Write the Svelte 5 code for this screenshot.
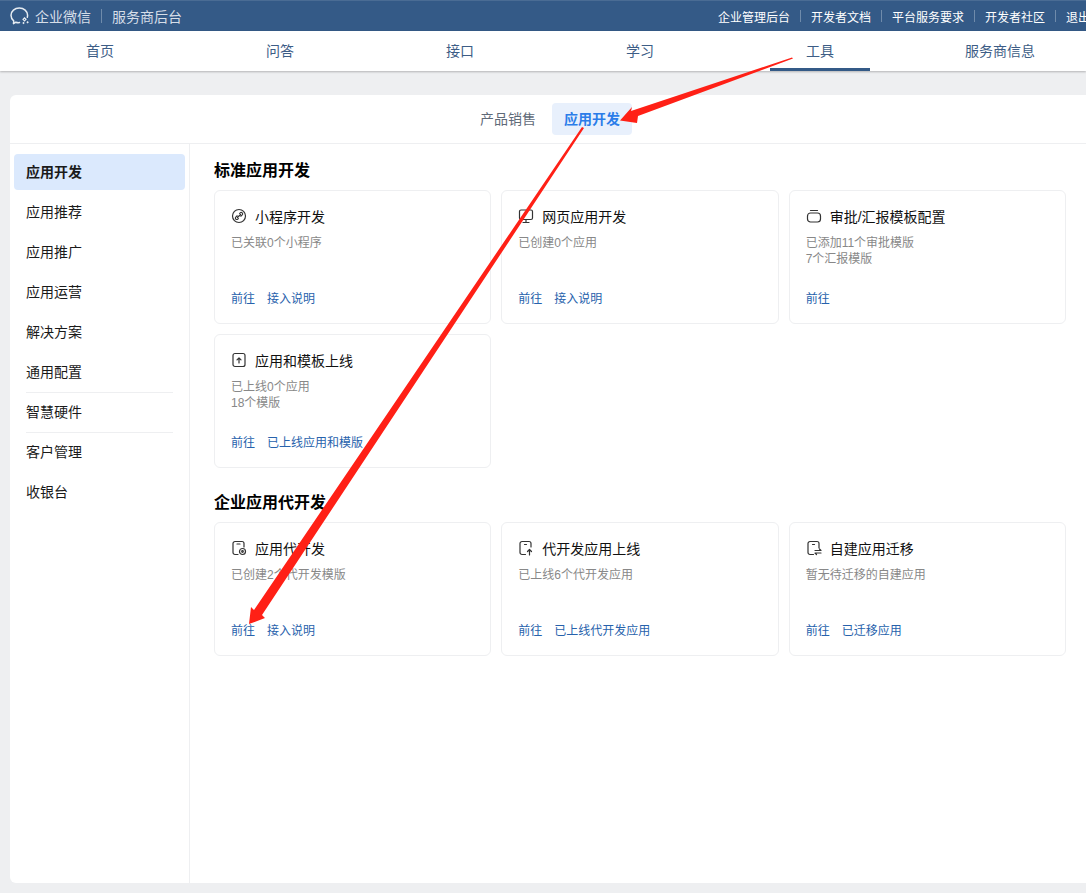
<script>
  const top = ['企业管理后台', '开发者文档', '平台服务要求', '开发者社区', '退出'];
  const nav = ['首页', '问答', '接口', '学习', '工具', '服务商信息'];
  const side = [
    { t: '应用开发', on: true }, { t: '应用推荐' }, { t: '应用推广' }, { t: '应用运营' }, { t: '解决方案' },
    { t: '通用配置', line: true }, { t: '智慧硬件', line: true }, { t: '客户管理' }, { t: '收银台' }
  ];
  const sections = [
    { title: '标准应用开发', cards: [
      { icon: 'link', t: '小程序开发', d: ['已关联0个小程序'], l: '接入说明' },
      { icon: 'screen', t: '网页应用开发', d: ['已创建0个应用'], l: '接入说明' },
      { icon: 'bag', t: '审批/汇报模板配置', d: ['已添加11个审批模版', '7个汇报模版'] },
      { icon: 'up', t: '应用和模板上线', d: ['已上线0个应用', '18个模版'], l: '已上线应用和模版' }
    ]},
    { title: '企业应用代开发', cards: [
      { icon: 'gear', t: '应用代开发', d: ['已创建2个代开发模版'], l: '接入说明' },
      { icon: 'docup', t: '代开发应用上线', d: ['已上线6个代开发应用'], l: '已上线代开发应用' },
      { icon: 'move', t: '自建应用迁移', d: ['暂无待迁移的自建应用'], l: '已迁移应用' }
    ]}
  ];
</script>

<div class="page">
  <header class="topbar">
    <div class="brand">
      <svg class="logo" viewBox="0 0 20 18" width="20" height="18" aria-hidden="true">
        <path d="M9.500 15.600c-1.300.2-2.600 0-3.700-.4l-2.300 1.500.2-2.900C2 12.400 1 10.500 1 8.300 1 4.300 4.700 1 9.300 1s8.300 3.300 8.300 7.300c0 .7-.1 1.300-.3 1.900" fill="none" stroke="currentColor" stroke-width="1.500" stroke-linecap="round" stroke-linejoin="round"/>
        <path d="M13 12.300l1.500-1.500 1.500 1.500-1.500 1.500z" fill="none" stroke="currentColor" stroke-width="1.200"/>
        <path d="M12.300 16l1.200-1.200 1.200 1.200-1.200 1.200z" fill="currentColor"/>
        <path d="M16.400 15.200l1.200-1.200 1.200 1.200-1.200 1.200z" fill="currentColor"/>
      </svg>
      <span>企业微信</span><i class="sep brandsep"></i><span>服务商后台</span>
    </div>
    <nav class="toplinks">
      {#each top as t, i}
        {#if i > 0}<i class="sep"></i>{/if}<a href="#a">{t}</a>
      {/each}
    </nav>
  </header>

  <nav class="mainnav">
    {#each nav as t}
      <a href="#b" class:active={t === '工具'}>{t}</a>
    {/each}
  </nav>

  <main class="panel">
    <div class="tabs">
      <span class="tab">产品销售</span>
      <span class="tab on">应用开发</span>
    </div>
    <div class="body">
      <aside class="side">
        {#each side as s}
          <div class="sitem" class:on={s.on} class:line={s.line}><span>{s.t}</span></div>
        {/each}
      </aside>
      <section class="content">
        {#each sections as sec}
          <h2>{sec.title}</h2>
          <div class="grid">
            {#each sec.cards as c}
              <article class="card">
                <div class="ct">
                  <svg viewBox="0 0 16 16" width="16" height="16" fill="none" stroke="currentColor" stroke-width="1.200" stroke-linecap="round" stroke-linejoin="round" aria-hidden="true">
                    {#if c.icon === 'link'}
                      <circle cx="8" cy="8" r="6.500"/><path d="M8.600 5.400l.6-.5a1.400 1.400 0 0 1 2 2L9.800 8.200M7.400 10.600l-.6.500a1.400 1.400 0 0 1-2-2l1.400-1.300M6.500 9.500l3-3"/>
                    {:else if c.icon === 'screen'}
                      <rect x="1.500" y="2" width="13" height="9.500" rx="1.500"/><path d="M8 11.500v3M5 14.500h6"/>
                    {:else if c.icon === 'bag'}
                      <rect x="1.500" y="5" width="13" height="9" rx="3"/><path d="M4.500 2.500h7"/>
                    {:else if c.icon === 'up'}
                      <rect x="2" y="1.500" width="12" height="13" rx="2"/><path d="M8 11V6M6 7.800 8 5.800l2 2"/>
                    {:else if c.icon === 'gear'}
                      <path d="M7 14.500H4a2 2 0 0 1-2-2v-9a2 2 0 0 1 2-2h7a2 2 0 0 1 2 2V7"/><path d="M6 4h3"/><circle cx="11.500" cy="11.500" r="3"/><circle cx="11.500" cy="11.500" r=".8"/>
                    {:else if c.icon === 'docup'}
                      <path d="M7.500 14.500H4a2 2 0 0 1-2-2v-9a2 2 0 0 1 2-2h7a2 2 0 0 1 2 2V7"/><path d="M6.500 4.500h2M11.500 15V9.500M9.500 11.500l2-2 2 2"/>
                    {:else}
                      <path d="M7.500 14.500H4a2 2 0 0 1-2-2v-9a2 2 0 0 1 2-2h7a2 2 0 0 1 2 2V8"/><path d="M6.500 4.500h2M9 10.500h6l-1.500-1.500M15 13H9l1.500 1.500"/>
                    {/if}
                  </svg>
                  <span>{c.t}</span>
                </div>
                <div class="cd">
                  {#each c.d as line}<p>{line}</p>{/each}
                </div>
                <div class="cl">
                  <a href="#c">前往</a>
                  {#if c.l}<a href="#d">{c.l}</a>{/if}
                </div>
              </article>
            {/each}
          </div>
        {/each}
      </section>
    </div>
  </main>

  <svg class="arrows" viewBox="0 0 1086 893" width="1086" height="893" aria-hidden="true">
    <polygon points="792,57.500 793,58.500 638,116 637,123 620,120.500 632,107 631,111" fill="#ff2016"/>
    <polygon points="582,127 584,128 262,615 265,618 249,624 251,607 254,610" fill="#ff2016"/>
  </svg>
</div>

<style>
  :global(body) { margin: 0; background: #eeeff1; }
  .page {
    position: relative;
    width: 1086px;
    height: 893px;
    overflow: hidden;
    background: #eeeff1;
    font-family: "Liberation Sans", "Noto Sans CJK SC", sans-serif;
    font-size: 12px;
    color: #000;
  }
  a { color: inherit; text-decoration: none; }
  .topbar {
    height: 30px;
    margin-top: 1px;
    background: #345a87;
    color: #fff;
    display: flex;
    justify-content: space-between;
    align-items: center;
    box-shadow: 0 -1px 0 #4a6c94;
    white-space: nowrap;
  }
  .brand {
    display: flex;
    align-items: center;
    padding-left: 10px;
    font-size: 14px;
    color: #d6dee8;
  }
  .logo { margin-right: 5px; color: #e6ecf2; }
  .sep {
    display: block;
    flex: none;
    width: 1px;
    height: 12px;
    background: #6f8bab;
    margin: 0 10px;
  }
  .brandsep { height: 14px; }
  .toplinks {
    display: flex;
    align-items: center;
    flex: none;
    width: 368px;
    font-size: 12px;
  }
  .toplinks a { flex: none; }
  .mainnav {
    height: 40px;
    display: flex;
    padding-left: 10px;
    background: #fff;
    box-shadow: 0 1px 2px rgba(0, 0, 0, .25);
    position: relative;
    width: 1076px;
  }
  .mainnav a {
    flex: none;
    width: 180px;
    position: relative;
    text-align: center;
    line-height: 40px;
    font-size: 14px;
    color: #3d5d86;
  }
  .mainnav .active::after {
    content: "";
    position: absolute;
    left: 40px;
    bottom: 0;
    width: 100px;
    height: 3px;
    background: #345a87;
  }
  .panel {
    margin: 24px 0 0 10px;
    height: 788px;
    width: 1076px;
    background: #fff;
    border-radius: 6px 0 0 6px;
    display: flex;
    flex-direction: column;
  }
  .tabs {
    height: 49px;
    flex: none;
    box-sizing: border-box;
    padding-top: 8px;
    border-bottom: 1px solid #eeeff1;
    display: flex;
    justify-content: center;
  }
  .tab {
    height: 32px;
    line-height: 32px;
    padding: 0 12px;
    font-size: 14px;
    color: #5f6a78;
    border-radius: 4px;
    margin-left: 4px;
  }
  .tab.on { background: #e8f0fc; color: #2b7de9; font-weight: 700; }
  .body { flex: 1; display: flex; min-height: 0; }
  .side {
    width: 180px;
    flex: none;
    box-sizing: border-box;
    border-right: 1px solid #eeeff1;
    padding: 10px 4px 0;
  }
  .sitem {
    height: 36px;
    margin-bottom: 4px;
    padding: 0 12px;
    line-height: 36px;
    font-size: 14px;
    color: #1a1a1a;
    border-radius: 4px;
    position: relative;
    width: 171px;
    box-sizing: border-box;
  }
  .sitem.on { background: #dbe9fd; font-weight: 700; }
  .sitem.line::after {
    content: "";
    position: absolute;
    left: 12px;
    right: 12px;
    bottom: -3px;
    height: 1px;
    background: #eeeff1;
  }
  .content { flex: 1; padding: 15px 20px 0 24px; }
  h2 {
    margin: 0;
    font-size: 16px;
    line-height: 24px;
    height: 31px;
    color: #000;
    font-weight: 700;
  }
  .grid {
    display: grid;
    grid-template-columns: repeat(3, 1fr);
    gap: 10px;
    margin-bottom: 23px;
    width: 852px;
  }
  .card {
    height: 134px;
    box-sizing: border-box;
    border: 1px solid #eeeff1;
    border-radius: 6px;
    padding: 15px 16px 16px;
    display: flex;
    flex-direction: column;
  }
  .ct {
    display: flex;
    align-items: center;
    gap: 8px;
    height: 20px;
    font-size: 14px;
    color: #111;
  }
  .ct svg { color: #333; flex: none; width: 16px; height: 16px; }
  .cd { margin-top: 9px; color: #888; line-height: 16px; flex: 1; }
  .cd p { margin: 0; }
  .cl { display: flex; gap: 12px; color: #2762ac; line-height: 16px; }
  .arrows { position: absolute; left: 0; top: 0; pointer-events: none; }
</style>
